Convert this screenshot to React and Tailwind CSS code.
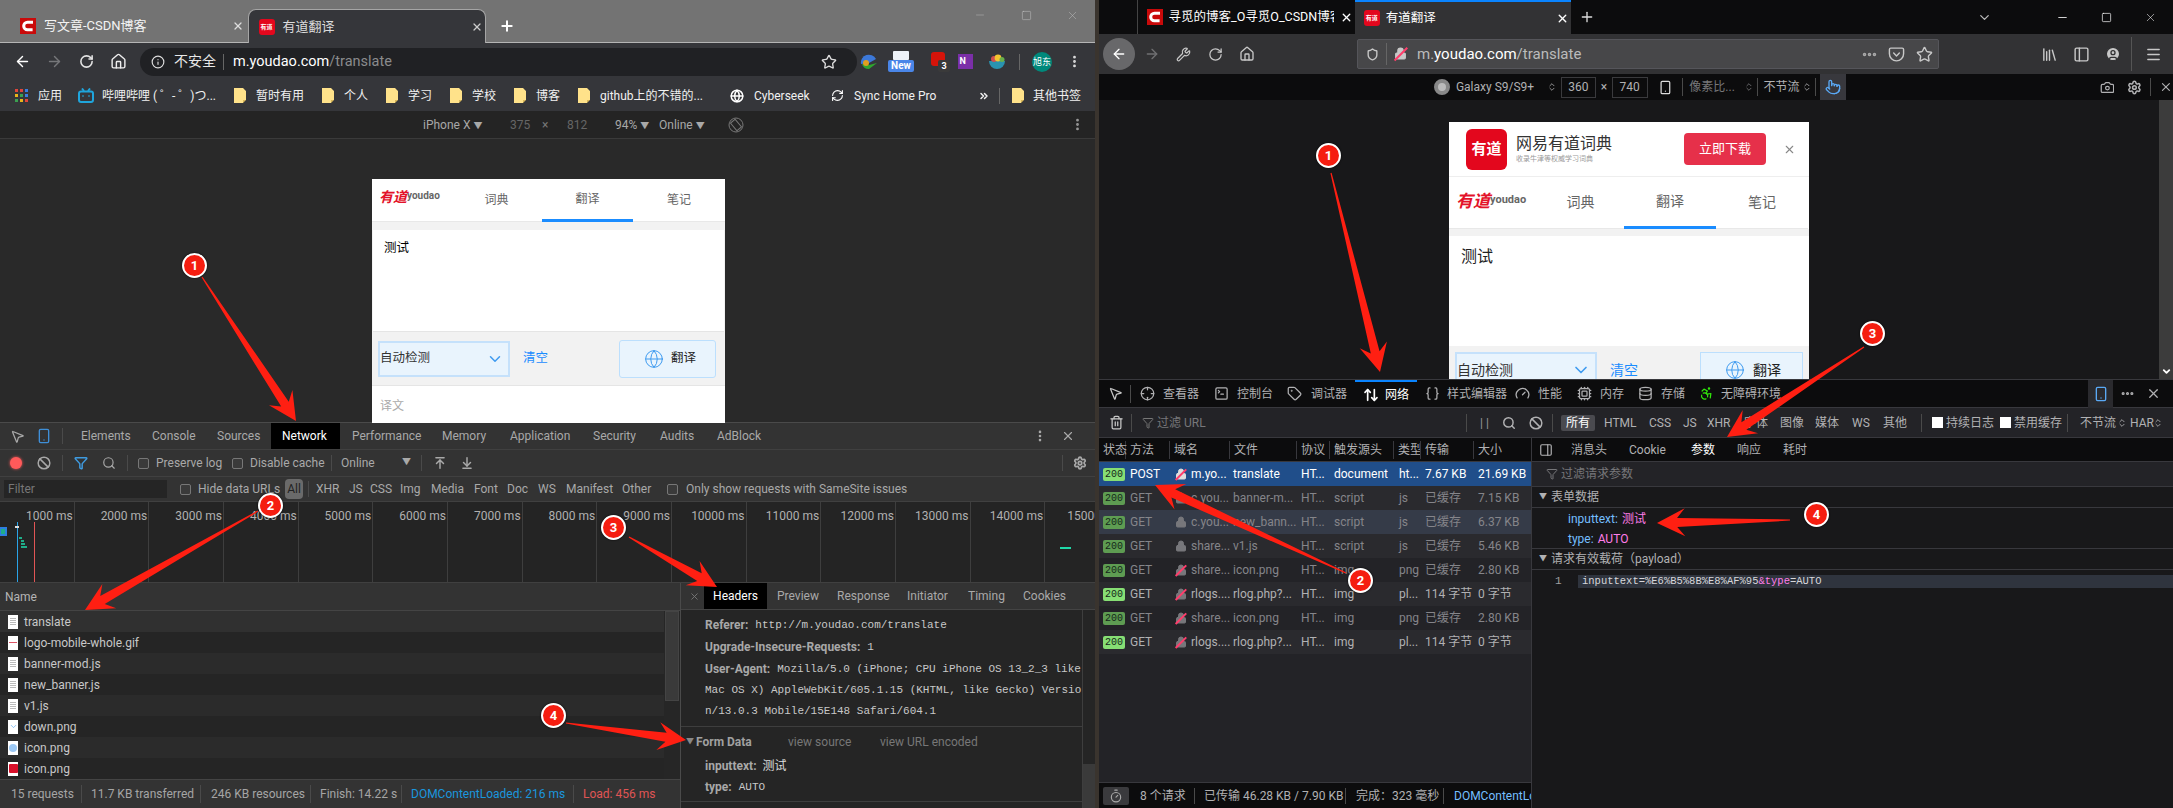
import React from 'react';
import { ArrowLeft, ArrowRight, RotateCw, House, Info, Star, X, Plus, EllipsisVertical, ChevronDown, Minus, Square, Shield, Lock, Wrench, Ellipsis, Menu, CircleUser, Trash2, Funnel, Search, Ban, Settings, Camera, Pointer, Smartphone, SquareTerminal, Braces, Gauge, Timer, Globe, Library, PanelLeft, Pocket, MousePointer2, ArrowUpDown, Cpu, Database, Accessibility, Tag, Crosshair, PanelRight, ChevronsRight, ChevronsUpDown, ArrowUpToLine, ArrowDownToLine, RefreshCw } from 'lucide-react';

function arrowPts(x1, y1, x2, y2, hl = 28, hw = 28, sw = 9) {
  const l = Math.hypot(x2 - x1, y2 - y1);
  const ux = (x2 - x1) / l, uy = (y2 - y1) / l, nx = -uy, ny = ux;
  const p = (d, s) => `${x2 - ux * d + nx * s},${y2 - uy * d + ny * s}`;
  return [p(l, 0.6), p(hl * 0.72, sw / 2), p(hl, hw / 2), p(0, 0), p(hl, -hw / 2), p(hl * 0.72, -sw / 2), p(l, -0.6)].join(' ');
}

const arrows = [
  [202, 277, 296, 421], [258, 511, 85, 610], [629, 537, 717, 587], [566, 723, 686, 740],
  [1331, 173, 1380, 372], [1346, 573, 1155, 485], [1864, 347, 1727, 437], [1790, 520, 1657, 523],
];

function Marks() {
  return (
    <>
      <svg className="absolute left-0 top-0 pointer-events-none" width="2173" height="808">
        {arrows.map((a, i) => <polygon key={i} points={arrowPts(...a)} fill="#ff1f12" />)}
      </svg>
      <Dot c="left-[182px] top-[253px]">1</Dot>
      <Dot c="left-[258px] top-[493px]">2</Dot>
      <Dot c="left-[601px] top-[515px]">3</Dot>
      <Dot c="left-[541px] top-[703px]">4</Dot>
      <Dot c="left-[1316px] top-[143px]">1</Dot>
      <Dot c="left-[1348px] top-[568px]">2</Dot>
      <Dot c="left-[1860px] top-[321px]">3</Dot>
      <Dot c="left-[1804px] top-[502px]">4</Dot>
    </>
  );
}

function Dot({ c, children }) {
  return (
    <div className={`absolute w-[25px] h-[25px] rounded-full bg-[#f51d10] border-2 border-white flex items-center justify-center text-white font-bold text-[13px] shadow-[0_0_2px_#000] ${c}`}>
      {children}
    </div>
  );
}

function CsdnIcon() {
  return (
    <svg width="16" height="16" viewBox="0 0 16 16" className="shrink-0">
      <rect width="16" height="16" fill="#c90a0a" />
      <path d="M13 4.2 H7.5 a3.8 3.8 0 0 0 0 7.6 H12.6" fill="none" stroke="#fff" strokeWidth="3" />
    </svg>
  );
}

function YdIcon() {
  return (
    <div className="w-[16px] h-[16px] shrink-0 rounded-[3px] bg-[#e3071d] flex items-center justify-center text-white text-[6px] font-bold overflow-hidden leading-none">有道</div>
  );
}

function Folder() {
  return (
    <svg width="12" height="15" viewBox="0 0 12 15" className="shrink-0">
      <path d="M0 0H9L12 3V12H9V15H0Z" fill="#ffe28a" />
      <path d="M9 12H12L9 15Z" fill="#d9b85a" />
    </svg>
  );
}

function Cb() {
  return <div className="w-[11px] h-[11px] shrink-0 rounded-[2px] border border-[#777] bg-[#3a3a3a]" />;
}

function Sep({ c }) {
  return <div className={`w-px shrink-0 bg-[#4a4a4a] ${c}`} />;
}

function ChromeWindow() {
  return (
    <div className="w-[1095px] shrink-0 h-[808px] flex flex-col overflow-hidden">
      <div className="h-[43px] shrink-0 bg-[#737373] flex text-[13px] text-[#eee]">
        <div className="w-[248px] h-[43px] border-b border-[#b5b5b5] flex items-center pl-[20px] pt-[9px]">
          <CsdnIcon />
          <span className="ml-[8px] w-[188px] text-[#f3f3f3]">写文章-CSDN博客</span>
          <X size={12} strokeWidth={2.5} className="text-[#ddd]" />
        </div>
        <div className="w-[239px] h-[34px] mt-[9px] rounded-t-[8px] border border-b-0 border-[#a5a5a5] bg-[#35363a] flex items-center pl-[10px]">
          <YdIcon />
          <span className="ml-[8px] w-[188px] text-[#ddd]">有道翻译</span>
          <X size={12} strokeWidth={2.5} className="text-[#ccc]" />
        </div>
        <div className="flex-1 h-[43px] border-b border-[#b5b5b5] flex">
          <div className="w-[42px] h-[34px] mt-[9px] flex items-center justify-center"><Plus size={16} strokeWidth={3} className="text-white" /></div>
          <div className="ml-[429px] w-[46px] h-[30px] flex items-center justify-center text-[#bbb]"><Minus size={12} strokeWidth={1} /></div>
          <div className="w-[46px] h-[30px] flex items-center justify-center text-[#ccc]"><Square size={11} strokeWidth={1} /></div>
          <div className="w-[46px] h-[30px] flex items-center justify-center text-[#bbb]"><X size={13} strokeWidth={1} /></div>
        </div>
      </div>
      <div className="h-[37px] shrink-0 bg-[#35363a] flex items-center pl-[6px] text-white">
        <div className="w-[32px] flex justify-center"><ArrowLeft size={17} strokeWidth={2} /></div>
        <div className="w-[32px] flex justify-center text-[#76777a]"><ArrowRight size={17} strokeWidth={2} /></div>
        <div className="w-[32px] flex justify-center text-[#e4e4e4]"><RotateCw size={15} strokeWidth={2.5} /></div>
        <div className="w-[32px] flex justify-center text-[#eee]"><House size={17} strokeWidth={2} /></div>
        <div className="ml-[6px] w-[717px] h-[28px] rounded-full bg-[#202124] flex items-center pl-[11px] pr-[20px]">
          <Info size={14} className="text-[#ddd] shrink-0" />
          <span className="ml-[9px] w-[42px] text-[14px] text-[#e8e8e8]">不安全</span>
          <div className="ml-[7px] w-px h-[16px] bg-[#666]" />
          <span className="ml-[9px] text-[14.5px] text-[#fff]">m.youdao.com<span className="text-[#8a8b8d]">/translate</span></span>
          <Star size={16} className="ml-auto text-[#ddd]" />
        </div>
        <div className="w-[24px] flex justify-center">
          <svg width="18" height="16" viewBox="0 0 18 16"><path d="M1 10a8 8 0 0 1 15-5L9 9Z" fill="#3c78d8" /><path d="M2 10a7 7 0 0 0 7 5l8-6-8 2Z" fill="#2fa52f" /><circle cx="6" cy="9" r="3" fill="#e0a020" /></svg>
        </div>
        <div className="ml-[4px] w-[32px] flex flex-col items-center">
          <div className="w-[16px] h-[9px] bg-[#eef2f8] rounded-[1px]" />
          <div className="w-[26px] h-[12px] bg-[#4a86e8] rounded-[2px] text-white text-[10px] font-bold leading-[12px] text-center">New</div>
        </div>
        <div className="ml-[11px] w-[24px] h-[22px] relative">
          <div className="w-[14px] h-[14px] rounded-[3px] bg-[#d5140a] mt-[1px] ml-[3px]" />
          <div className="absolute left-[10px] top-[9px] w-[12px] h-[12px] rounded-[2px] bg-[#3a3a3a] text-white text-[9px] leading-[12px] text-center font-bold">3</div>
        </div>
        <div className="ml-[1px] w-[24px] flex justify-center">
          <div className="w-[15px] h-[15px] bg-[#7b2fa8] text-white text-[9px] font-bold leading-[15px] pl-[2px]">N</div>
        </div>
        <div className="ml-[8px] w-[24px] flex justify-center">
          <svg width="16" height="16" viewBox="0 0 16 16"><path d="M0 7a8 8 0 0 0 16 0Z" fill="#2a93b0" /><circle cx="5" cy="5" r="3" fill="#d05050" /><circle cx="9" cy="4" r="3.4" fill="#f3c530" /><circle cx="13" cy="5.5" r="2.5" fill="#6ab04a" /></svg>
        </div>
        <div className="ml-[10px] w-px h-[16px] bg-[#666]" />
        <div className="ml-[12px] w-[20px] h-[20px] rounded-full bg-[#00897b] text-white text-[9px] leading-[20px] text-center">旭东</div>
        <div className="ml-[14px] w-[16px] flex justify-center text-[#ddd]"><EllipsisVertical size={15} strokeWidth={2.5} /></div>
      </div>
      <div className="h-[31px] shrink-0 bg-[#35363a] flex items-center pl-[15px] text-[12px] text-[#f1f1f1]">
        <div className="w-[23px]">
          <svg width="13" height="13" viewBox="0 0 13 13">
            <rect width="3" height="3" fill="#e0453a" /><rect x="5" width="3" height="3" fill="#e0453a" /><rect x="10" width="3" height="3" fill="#3a7de0" />
            <rect y="5" width="3" height="3" fill="#e8b41a" /><rect x="5" y="5" width="3" height="3" fill="#3aa050" /><rect x="10" y="5" width="3" height="3" fill="#3a7de0" />
            <rect y="10" width="3" height="3" fill="#3aa050" /><rect x="5" y="10" width="3" height="3" fill="#e8b41a" /><rect x="10" y="10" width="3" height="3" fill="#e0453a" />
          </svg>
        </div>
        <span className="w-[40px]">应用</span>
        <div className="w-[24px]">
          <svg width="16" height="15" viewBox="0 0 16 15" fill="none" stroke="#1fa5dc" strokeWidth="2"><rect x="1" y="3.5" width="14" height="10.5" rx="2" /><path d="M4 0.5 6 3M12 0.5 10 3" /><path d="M5 7.5v1M11 7.5v1" /></svg>
        </div>
        <span className="w-[132px]">哔哩哔哩 ( ゜- ゜)つ...</span>
        <div className="w-[22px]"><Folder /></div><span className="w-[66px]">暂时有用</span>
        <div className="w-[22px]"><Folder /></div><span className="w-[42px]">个人</span>
        <div className="w-[22px]"><Folder /></div><span className="w-[42px]">学习</span>
        <div className="w-[22px]"><Folder /></div><span className="w-[42px]">学校</span>
        <div className="w-[22px]"><Folder /></div><span className="w-[42px]">博客</span>
        <div className="w-[22px]"><Folder /></div><span className="w-[130px]">github上的不错的...</span>
        <div className="w-[24px]"><Globe size={14} strokeWidth={2.5} className="text-white" /></div><span className="w-[77px]">Cyberseek</span>
        <div className="w-[23px]"><RefreshCw size={13} className="text-white" /></div><span className="w-[124px]">Sync Home Pro</span>
        <div className="w-[21px]"><ChevronsRight size={12} strokeWidth={3} /></div>
        <div className="w-[13px]"><div className="w-px h-[16px] bg-[#666]" /></div>
        <div className="w-[21px]"><Folder /></div><span>其他书签</span>
      </div>
      <div className="h-[28px] shrink-0 bg-[#242424] flex items-center pl-[423px] text-[12px] text-[#a8a8a8] border-b border-[#3a3a3a]">
        <span className="w-[87px]">iPhone X <span className="text-[9px]">▼</span></span>
        <span className="w-[32px] text-[#666]">375</span>
        <span className="w-[25px] text-[#777]">×</span>
        <span className="w-[48px] text-[#666]">812</span>
        <span className="w-[44px]">94% <span className="text-[9px]">▼</span></span>
        <span className="w-[69px]">Online <span className="text-[9px]">▼</span></span>
        <svg width="16" height="16" viewBox="0 0 16 16" fill="none" stroke="#777"><circle cx="8" cy="8" r="7" /><rect x="5" y="3" width="6" height="10" transform="rotate(-40 8 8)" /></svg>
        <EllipsisVertical size={15} strokeWidth={2.5} className="ml-auto mr-[10px] text-[#999]" />
      </div>
      <div className="h-[284px] shrink-0 bg-[#292929] pt-[40px] pl-[372px] border-b border-[#4a4a4a]">
        <div className="w-[353px] h-[244px] overflow-hidden bg-white">
          <div className="h-[43px] flex text-[12px] text-[#666]">
            <div className="w-[79px] pl-[7px] pt-[8px] flex items-start border-b border-[#e8e8e8]">
              <span className="text-[#e3122a] text-[14px] font-bold italic leading-[20px]">有道</span>
              <span className="text-[#666] text-[10px] font-bold leading-[18px]">youdao</span>
            </div>
            <div className="w-[91px] flex items-center justify-center border-b border-[#e8e8e8]">词典</div>
            <div className="w-[91px] flex items-center justify-center border-b-[3px] border-[#1a8cff]">翻译</div>
            <div className="w-[92px] flex items-center justify-center border-b border-[#e8e8e8]">笔记</div>
          </div>
          <div className="bg-[#f2f2f2] pt-[8px]">
            <div className="mx-px h-[102px] bg-white pl-[11px] pt-[9px] text-[12.5px] text-black border-b border-[#e5e5e5]">测试</div>
            <div className="h-[53px] flex items-center">
              <div className="ml-[6px] w-[132px] h-[36px] bg-[#e9f4fd] border-2 border-[#c5e1fb] flex items-center text-[12.5px] text-[#333]">
                自动检测
                <ChevronDown size={18} strokeWidth={2} className="ml-auto mr-[4px] text-[#3f9bf0]" />
              </div>
              <span className="ml-[13px] w-[96px] text-[12.5px] text-[#1a8cff]">清空</span>
              <div className="w-[97px] h-[38px] rounded-[3px] bg-[#e9f4fd] border border-[#bcdffd] flex items-center pl-[24px] text-[12.5px] text-[#222]">
                <Globe size={20} strokeWidth={1.2} className="text-[#3f9bf0]" />
                <span className="ml-[7px]">翻译</span>
              </div>
            </div>
          </div>
          <div className="border-t border-[#e5e5e5] pl-[8px] pt-[11px] text-[12px] text-[#aaa]">译文</div>
        </div>
      </div>
      <div className="flex-1 min-h-0 bg-[#333] text-[12px] text-[#a9a9a9] flex flex-col">
        <div className="h-[27px] shrink-0 flex items-center border-b border-[#404040]">
          <MousePointer2 size={15} className="ml-[10px] text-[#aaa]" />
          <Smartphone size={16} className="ml-[11px] text-[#3f8fd8]" />
          <Sep c="ml-[10px] h-[16px]" />
          <span className="ml-[18px] w-[71px]">Elements</span>
          <span className="w-[65px]">Console</span>
          <span className="w-[54px]">Sources</span>
          <div className="w-[69px] h-[26px] bg-black text-white flex items-center pl-[11px]">Network</div>
          <span className="ml-[12px] w-[90px]">Performance</span>
          <span className="w-[68px]">Memory</span>
          <span className="w-[83px]">Application</span>
          <span className="w-[67px]">Security</span>
          <span className="w-[57px]">Audits</span>
          <span className="w-[316px]">AdBlock</span>
          <EllipsisVertical size={14} strokeWidth={2.5} />
          <X size={14} strokeWidth={2} className="ml-[14px]" />
        </div>
        <div className="h-[27px] shrink-0 flex items-center border-b border-[#404040]">
          <div className="ml-[10px] w-[12px] h-[12px] rounded-full bg-[#ff5a5a] shadow-[0_0_3px_#ff5a5a]" />
          <Ban size={14} strokeWidth={2.5} className="ml-[15px]" />
          <Sep c="ml-[11px] h-[16px]" />
          <Funnel size={14} strokeWidth={2.5} className="ml-[11px] text-[#3f9be0]" />
          <Search size={14} strokeWidth={2} className="ml-[14px]" />
          <Sep c="ml-[11px] h-[16px]" />
          <div className="ml-[10px]"><Cb /></div>
          <span className="ml-[7px] w-[76px]">Preserve log</span>
          <Cb />
          <span className="ml-[7px] w-[81px]">Disable cache</span>
          <Sep c="h-[16px]" />
          <span className="ml-[9px] w-[61px]">Online</span>
          <span className="w-[19px] text-[9px]">▼</span>
          <Sep c="h-[16px]" />
          <ArrowUpToLine size={14} strokeWidth={2.5} className="ml-[11px]" />
          <ArrowDownToLine size={14} strokeWidth={2.5} className="ml-[13px]" />
          <Sep c="ml-auto h-[16px]" />
          <Settings size={14} strokeWidth={3} className="ml-[10px] mr-[8px]" />
        </div>
        <div className="h-[25px] shrink-0 flex items-center border-b border-[#404040]">
          <div className="ml-[4px] w-[163px] h-[18px] bg-[#252525] pl-[4px] leading-[18px] text-[#777]">Filter</div>
          <div className="ml-[13px]"><Cb /></div>
          <span className="ml-[7px] w-[87px]">Hide data URLs</span>
          <div className="w-[18px] h-[20px] rounded-[4px] bg-[#6a6a6a] text-[#222] text-center leading-[20px]">All</div>
          <Sep c="ml-[5px] h-[16px]" />
          <span className="ml-[7px] w-[33px]">XHR</span>
          <span className="w-[21px]">JS</span>
          <span className="w-[30px]">CSS</span>
          <span className="w-[31px]">Img</span>
          <span className="w-[43px]">Media</span>
          <span className="w-[33px]">Font</span>
          <span className="w-[31px]">Doc</span>
          <span className="w-[28px]">WS</span>
          <span className="w-[56px]">Manifest</span>
          <span className="w-[45px]">Other</span>
          <Cb />
          <span className="ml-[8px]">Only show requests with SameSite issues</span>
        </div>
        <div className="h-[81px] shrink-0 bg-[#242424] flex border-b border-[#404040] text-[#b0b0b0] overflow-hidden relative">
          {['1000', '2000', '3000', '4000', '5000', '6000', '7000', '8000', '9000', '10000', '11000', '12000', '13000', '14000'].map((t) => (
            <div key={t} className="w-[74.66px] shrink-0 border-r border-[#3e3e3e] text-right pr-px pt-[6px] leading-[16px]">{t} ms</div>
          ))}
          <div className="w-[50px] pl-[22px] pt-[6px] leading-[16px] overflow-hidden">15000</div>
          <svg className="absolute left-0 top-0" width="1095" height="81">
            <rect x="0" y="25" width="7" height="9" fill="#2d7fe0" /><rect x="1" y="27" width="4" height="5" fill="#1fae8a" />
            <rect x="17" y="20" width="1" height="61" fill="#2aa4e8" /><rect x="34" y="20" width="1" height="61" fill="#e25555" />
            <rect x="15" y="24" width="4" height="2" fill="#ddd" />
            <rect x="19" y="35" width="3" height="2" fill="#1fae8a" /><rect x="21" y="38" width="3" height="2" fill="#1fae8a" /><rect x="21" y="41" width="4" height="2" fill="#1fae8a" /><rect x="21" y="44" width="6" height="2" fill="#1fae8a" />
            <rect x="1060" y="45" width="11" height="2" fill="#1fd8a8" />
          </svg>
        </div>
        <div className="flex-1 min-h-0 flex">
          <div className="w-[680px] shrink-0 flex flex-col">
            <div className="h-[28px] shrink-0 flex items-center pl-[5px] border-b border-[#444] text-[#b5b5b5]">Name</div>
            <div className="h-[168px] shrink-0 flex">
              <div className="flex-1">
                {[
                  ['translate', 'doc', 'bg-[#303030]'],
                  ['logo-mobile-whole.gif', 'gif', 'bg-[#252525]'],
                  ['banner-mod.js', 'doc', 'bg-[#2b2b2b]'],
                  ['new_banner.js', 'doc', 'bg-[#252525]'],
                  ['v1.js', 'doc', 'bg-[#2b2b2b]'],
                  ['down.png', 'down', 'bg-[#252525]'],
                  ['icon.png', 'globe', 'bg-[#2b2b2b]'],
                  ['icon.png', 'red', 'bg-[#252525]'],
                ].map(([t, k, bg], i) => (
                  <div key={i} className={`h-[21px] flex items-center pl-[8px] text-[#c8c8c8] ${bg}`}>
                    <div className="w-[10px] h-[14px] bg-white shrink-0 flex flex-col items-center justify-center gap-px">
                      {k === 'doc' && <><div className="w-[6px] h-px bg-[#bbb]" /><div className="w-[6px] h-px bg-[#bbb]" /><div className="w-[6px] h-px bg-[#bbb]" /><div className="w-[6px] h-px bg-[#bbb]" /></>}
                      {k === 'gif' && <div className="w-[8px] h-px bg-[#d56]" />}
                      {k === 'down' && <ChevronDown size={9} className="text-[#6ab0f0]" />}
                      {k === 'globe' && <div className="w-[8px] h-[8px] rounded-full bg-[#9cc8f4]" />}
                      {k === 'red' && <div className="w-[9px] h-[9px] rounded-[1px] bg-[#d8102a]" />}
                    </div>
                    <span className="ml-[6px]">{t}</span>
                  </div>
                ))}
              </div>
              <div className="w-[16px] bg-[#262626]"><div className="mx-auto w-[14px] h-[90px] bg-[#3a3a3a] border border-[#444]" /></div>
            </div>
            <div className="flex-1 flex items-center border-t border-[#444] text-[#a5a5a5]">
              <span className="ml-[11px] w-[70px]">15 requests</span>
              <Sep c="h-[18px]" />
              <span className="ml-[9px] w-[109px]">11.7 KB transferred</span>
              <Sep c="h-[18px]" />
              <span className="ml-[10px] w-[99px]">246 KB resources</span>
              <Sep c="h-[18px]" />
              <span className="ml-[9px] w-[81px]">Finish: 14.22 s</span>
              <Sep c="h-[18px]" />
              <span className="ml-[9px] w-[162px] text-[#1a96de]">DOMContentLoaded: 216 ms</span>
              <Sep c="h-[18px]" />
              <span className="ml-[9px] text-[#e05555]">Load: 456 ms</span>
            </div>
          </div>
          <div className="flex-1 min-w-0 flex flex-col border-l border-[#4a4a4a] bg-[#252525]">
            <div className="h-[27px] shrink-0 flex items-center bg-[#333] border-b border-[#444]">
              <X size={11} className="ml-[8px] text-[#777]" />
              <div className="ml-[4px] w-[63px] h-[26px] bg-black text-white flex items-center justify-center">Headers</div>
              <span className="ml-[10px] w-[60px]">Preview</span>
              <span className="w-[70px]">Response</span>
              <span className="w-[61px]">Initiator</span>
              <span className="w-[55px]">Timing</span>
              <span>Cookies</span>
            </div>
            <div className="flex-1 min-h-0 flex">
              <div className="w-[401px] shrink-0 overflow-hidden">
                <div className="pt-[4px] pl-[24px] font-['Liberation_Mono',monospace] text-[11px] text-[#c8c8c8]">
                  <div className="h-[22px] flex items-center"><b className="font-['Roboto','Noto_Sans_CJK_SC',sans-serif] text-[12px] text-[#a8a8a8] mr-[7px]">Referer:</b>http://m.youdao.com/translate</div>
                  <div className="h-[22px] flex items-center"><b className="font-['Roboto','Noto_Sans_CJK_SC',sans-serif] text-[12px] text-[#a8a8a8] mr-[7px]">Upgrade-Insecure-Requests:</b>1</div>
                  <div className="h-[22px] flex items-center"><b className="font-['Roboto','Noto_Sans_CJK_SC',sans-serif] text-[12px] text-[#a8a8a8] mr-[7px]">User-Agent:</b>Mozilla/5.0 (iPhone; CPU iPhone OS 13_2_3 like</div>
                  <div className="h-[21px] flex items-center">Mac OS X) AppleWebKit/605.1.15 (KHTML, like Gecko) Versio</div>
                  <div className="h-[21px] flex items-center">n/13.0.3 Mobile/15E148 Safari/604.1</div>
                </div>
                <div className="mt-[4px] h-[30px] border-t border-[#3e3e3e] flex items-center pl-[5px] text-[#a0a0a0]">
                  <span className="text-[8px] text-[#888] mr-[2px]">▼</span>
                  <b className="w-[92px]">Form Data</b>
                  <span className="w-[92px] text-[#777]">view source</span>
                  <span className="text-[#777]">view URL encoded</span>
                </div>
                <div className="pl-[24px] h-[46px] border-b border-[#3e3e3e]">
                  <div className="h-[20px] flex items-center"><b className="text-[#a8a8a8] mr-[6px]">inputtext:</b><span className="text-[#ddd]">测试</span></div>
                  <div className="h-[22px] flex items-center"><b className="text-[#a8a8a8] mr-[7px]">type:</b><span className="font-['Liberation_Mono',monospace] text-[11px] text-[#c8c8c8]">AUTO</span></div>
                </div>
              </div>
              <div className="flex-1 border-l border-[#3e3e3e] flex flex-col justify-end">
                <div className="h-[44px] bg-[#3a3a3a]" />
              </div>
            </div>
          </div>
        </div>
      </div>
    </div>
  );
}

function FfTabIcon({ i }) {
  const cls = 'text-[#b1b1b3] shrink-0';
  const map = { Crosshair, SquareTerminal, Tag, ArrowUpDown, Braces, Gauge, Cpu, Database, Accessibility };
  const I = map[i];
  return <I size={15} className={cls} />;
}

const rows = [
  ['POST', 'm.yo...', 'translate', 'HT...', 'document', 'ht...', '7.67 KB', '21.69 KB', 'sel', 'http'],
  ['GET', 'c.you...', 'banner-m...', 'HT...', 'script', 'js', '已缓存', '7.15 KB', 'dimA', 'lock'],
  ['GET', 'c.you...', 'new_bann...', 'HT...', 'script', 'js', '已缓存', '6.37 KB', 'dimH', 'lock'],
  ['GET', 'share...', 'v1.js', 'HT...', 'script', 'js', '已缓存', '5.46 KB', 'dimA', 'lock'],
  ['GET', 'share...', 'icon.png', 'HT...', 'img', 'png', '已缓存', '2.80 KB', 'dimB', 'http'],
  ['GET', 'rlogs....', 'rlog.php?...', 'HT...', 'img', 'pl...', '114 字节', '0 字节', 'A', 'http'],
  ['GET', 'share...', 'icon.png', 'HT...', 'img', 'png', '已缓存', '2.80 KB', 'dimB', 'http'],
  ['GET', 'rlogs....', 'rlog.php?...', 'HT...', 'img', 'pl...', '114 字节', '0 字节', 'A', 'http'],
];

function NetRow({ r }) {
  const [m, d, f, p, t, ty, tr, s, kind, sec] = r;
  const bg = kind === 'sel' ? 'bg-[#204e8a]' : kind === 'dimH' ? 'bg-[#353b48]' : kind === 'dimB' ? 'bg-[#232327]' : 'bg-[#2a2a2e]';
  const tc = kind === 'sel' ? 'text-white' : kind.startsWith('dim') ? 'text-[#85858a]' : 'text-[#b1b1b3]';
  const dim = kind.startsWith('dim');
  return (
    <div className={`h-[24px] grid grid-cols-[27px_44px_60px_67px_33px_64px_27px_53px_58px] items-center overflow-hidden ${bg} ${tc}`}>
      <div className="pl-[4px]">
        <div className={`w-[22px] h-[13px] rounded-[2px] text-[#14281a] font-['Liberation_Mono',monospace] text-[10px] leading-[13px] text-center ${dim ? 'bg-[#5e9c52]' : 'bg-[#86de74]'}`}>200</div>
      </div>
      <div className="pl-[4px]">{m}</div>
      <div className="pl-[5px] flex items-center">
        {sec === 'lock'
          ? <Lock size={12} className="text-[#77777b] shrink-0" fill="#77777b" />
          : <div className="relative w-[12px] h-[12px] shrink-0"><Lock size={12} fill="currentColor" className={kind === 'sel' ? 'text-[#ddd]' : 'text-[#77777b]'} /><div className="absolute left-[5px] top-[-1px] w-[1.5px] h-[15px] rotate-45 bg-[#ff3d6b]" /></div>}
        <span className="ml-[4px] overflow-hidden">{d}</span>
      </div>
      <div className="pl-[3px] overflow-hidden">{f}</div>
      <div className="pl-[4px]">{p}</div>
      <div className="pl-[4px]">{t}</div>
      <div className="pl-[5px]">{ty}</div>
      <div className="pl-[4px] overflow-hidden">{tr}</div>
      <div className="pl-[4px]">{s}</div>
    </div>
  );
}

function FirefoxWindow() {
  return (
    <div className="flex-1 min-w-0 h-[808px] flex flex-col overflow-hidden bg-[#0c0c0d]">
      <div className="h-[34px] shrink-0 flex text-[13px] text-white">
        <div className="w-[39px]" />
        <div className="w-[226px] border-l border-[#444] flex items-center pl-[9px]">
          <CsdnIcon />
          <span className="ml-[6px] w-[165px] overflow-hidden whitespace-nowrap text-[12.5px]">寻觅的博客_O寻觅O_CSDN博客</span>
          <X size={13} strokeWidth={2.5} className="ml-[6px]" />
        </div>
        <div className="w-[224px] border-t-2 border-[#0a84ff] bg-[#323234] flex items-center pl-[9px]">
          <YdIcon />
          <span className="ml-[6px] w-[170px] text-[12.5px]">有道翻译</span>
          <X size={13} strokeWidth={2.5} />
        </div>
        <div className="w-[34px] flex items-center justify-center"><Plus size={16} className="text-[#ddd]" /></div>
        <div className="ml-[359px] w-[46px] flex items-center justify-center text-[#bbb]"><ChevronDown size={15} strokeWidth={2} /></div>
        <div className="ml-[33px] w-[46px] flex items-center justify-center"><Minus size={13} strokeWidth={1.5} /></div>
        <div className="w-[46px] flex items-center justify-center"><Square size={11} strokeWidth={1.5} /></div>
        <div className="w-[46px] flex items-center justify-center"><X size={13} strokeWidth={1} /></div>
      </div>
      <div className="h-[40px] shrink-0 bg-[#323234] flex items-center text-[#c8c8c8]">
        <div className="ml-[4px] w-[32px] h-[32px] rounded-full bg-[#68686a] flex items-center justify-center text-white"><ArrowLeft size={16} strokeWidth={2} /></div>
        <ArrowRight size={16} strokeWidth={2} className="ml-[9px] text-[#707072]" />
        <Wrench size={15} strokeWidth={2} className="ml-[16px]" />
        <RotateCw size={15} strokeWidth={2} className="ml-[17px]" />
        <House size={16} strokeWidth={2} className="ml-[16px]" />
        <div className="ml-[102px] w-[582px] h-[30px] rounded-[2px] border border-[#55555a] bg-[#474749] flex items-center pl-[8px]">
          <Shield size={13} strokeWidth={2.5} className="text-[#c8c8c8]" />
          <div className="ml-[7px] w-px h-[22px] bg-[#666]" />
          <div className="relative ml-[7px] w-[14px] h-[14px]"><Lock size={13} fill="#c8c8c8" className="text-[#c8c8c8]" /><div className="absolute left-[6px] top-[-2px] w-[1.5px] h-[18px] rotate-45 bg-[#ff3d6b]" /></div>
          <span className="ml-[9px] text-[15px] text-[#bbb]">m.<span className="text-white">youdao.com</span>/translate</span>
          <Ellipsis size={17} strokeWidth={3} className="ml-auto text-[#aaa]" />
          <Pocket size={17} strokeWidth={2} className="ml-[10px]" />
          <Star size={17} strokeWidth={2} className="ml-[11px] mr-[5px]" />
        </div>
        <Library size={17} className="ml-[102px]" />
        <PanelLeft size={17} className="ml-[15px]" />
        <CircleUser size={16} fill="#c8c8c8" className="ml-[15px] text-[#323234]" />
        <div className="ml-[10px] w-px h-[34px] bg-[#555]" />
        <Menu size={17} strokeWidth={2} className="ml-[13px]" />
      </div>
      <div className="h-[26px] shrink-0 flex items-center text-[12px] text-[#b1b1b3]">
        <div className="ml-[335px] w-[16px] h-[16px] rounded-full border-[4px] border-[#888] bg-[#bbb]" />
        <span className="ml-[6px] w-[92px]">Galaxy S9/S9+</span>
        <ChevronsUpDown size={10} className="text-[#aaa]" />
        <div className="ml-[4px] w-[36px] h-[21px] border border-[#3a3a3d] text-center leading-[19px]">360</div>
        <span className="w-[16px] text-center">×</span>
        <div className="w-[36px] h-[21px] border border-[#3a3a3d] text-center leading-[19px]">740</div>
        <Smartphone size={15} className="ml-[10px] text-[#ddd]" />
        <Sep c="ml-[10px] h-[18px]" />
        <span className="ml-[6px] w-[55px] text-[#77777a]">像素比...</span>
        <ChevronsUpDown size={10} className="text-[#77777a]" />
        <Sep c="ml-[3px] h-[18px]" />
        <span className="ml-[6px] w-[39px]">不节流</span>
        <ChevronsUpDown size={10} />
        <Sep c="ml-[3px] h-[18px]" />
        <div className="ml-[4px] w-[26px] h-[26px] bg-[#38383d] flex items-center justify-center text-[#5aa9f5]"><Pointer size={16} /></div>
        <Camera size={15} className="ml-[254px]" />
        <Settings size={15} strokeWidth={2.5} className="ml-[13px]" />
        <Sep c="ml-[8px] h-[18px]" />
        <X size={14} className="ml-[8px]" />
      </div>
      <div className="h-[279px] shrink-0 bg-[#18181a] flex overflow-hidden">
        <div className="ml-[350px] w-[360px] mt-[22px] h-[257px] overflow-hidden bg-white shrink-0">
          <div className="h-[55px] flex items-center border-b border-[#eee]">
            <div className="ml-[17px] w-[41px] h-[41px] rounded-[6px] bg-[#e3071d] flex items-center justify-center text-white font-bold text-[15px]">有道</div>
            <div className="ml-[9px] w-[168px]">
              <div className="text-[16px] leading-[19px] text-[#333]">网易有道词典</div>
              <div className="text-[7px] leading-[12px] text-[#999]">收录牛津等权威学习词典</div>
            </div>
            <div className="w-[82px] h-[32px] rounded-[4px] bg-[#e6304a] text-white text-[13px] flex items-center justify-center">立即下载</div>
            <X size={13} className="ml-[17px] text-[#888]" />
          </div>
          <div className="h-[52px] flex text-[14px] text-[#666]">
            <div className="w-[88px] pl-[7px] pt-[13px] flex items-start border-b border-[#e8e8e8]">
              <span className="text-[#e3122a] text-[17px] font-bold italic leading-[22px]">有道</span>
              <span className="text-[#666] text-[11px] font-bold leading-[20px]">youdao</span>
            </div>
            <div className="w-[87px] flex items-center justify-center border-b border-[#e8e8e8]">词典</div>
            <div className="w-[92px] flex items-center justify-center border-b-[3px] border-[#1a8cff]">翻译</div>
            <div className="w-[92px] flex items-center justify-center border-b border-[#e8e8e8]">笔记</div>
          </div>
          <div className="bg-[#f2f2f2] pt-[7px]">
            <div className="h-[110px] bg-white pl-[12px] pt-[9px] text-[16px] text-[#222]">测试</div>
            <div className="flex pt-[6px]">
              <div className="ml-[6px] w-[142px] h-[36px] bg-[#e9f4fd] border-2 border-[#c5e1fb] flex items-center text-[14px] text-[#333]">
                自动检测
                <ChevronDown size={20} className="ml-auto mr-[4px] text-[#3f9bf0]" />
              </div>
              <span className="ml-[13px] w-[90px] pt-[8px] text-[14px] text-[#1a8cff]">清空</span>
              <div className="w-[103px] h-[36px] border border-[#bcdffd] bg-[#e9f4fd] flex items-center pl-[24px] text-[14px] text-[#222]">
                <Globe size={20} strokeWidth={1.2} className="text-[#3f9bf0]" /><span className="ml-[8px]">翻译</span>
              </div>
            </div>
          </div>
        </div>
        <div className="flex-1" />
        <div className="w-[14px] shrink-0 bg-[#3c3c3c] flex flex-col items-center justify-end">
          <ChevronDown size={11} strokeWidth={4} className="text-white mb-[2px]" />
        </div>
      </div>
      <div className="flex-1 min-h-0 flex flex-col text-[12px] text-[#b1b1b3] border-t border-[#38383d]">
        <div className="h-[28px] shrink-0 flex items-center border-b border-[#38383d]">
          <div className="ml-[9px]"><MousePointer2 size={15} className="text-[#c8c8c8]" /></div>
          <Sep c="ml-[7px] h-[18px]" />
          <div className="ml-[9px] w-[23px]"><FfTabIcon i="Crosshair" /></div>
          <span className="w-[51px]">查看器</span>
          <div className="w-[23px]"><FfTabIcon i="SquareTerminal" /></div>
          <span className="w-[50px]">控制台</span>
          <div className="w-[24px]"><FfTabIcon i="Tag" /></div>
          <span className="w-[44px]">调试器</span>
          <div className="w-[62px] h-[28px] border-t-2 border-[#0a84ff] text-white flex items-center pl-[8px] gap-[6px]"><ArrowUpDown size={16} strokeWidth={2.5} />网络</div>
          <div className="ml-[8px] w-[22px]"><FfTabIcon i="Braces" /></div>
          <span className="w-[68px]">样式编辑器</span>
          <div className="w-[23px]"><FfTabIcon i="Gauge" /></div>
          <span className="w-[39px]">性能</span>
          <div className="w-[23px]"><FfTabIcon i="Cpu" /></div>
          <span className="w-[38px]">内存</span>
          <div className="w-[23px]"><FfTabIcon i="Database" /></div>
          <span className="w-[38px]">存储</span>
          <div className="w-[22px]"><Accessibility size={15} className="text-[#30e60b]" /></div>
          <span className="w-[367px]">无障碍环境</span>
          <div className="w-[25px] h-[28px] bg-[#2a2a2e] flex items-center justify-center text-[#5aa9f5]"><Smartphone size={16} /></div>
          <Ellipsis size={15} strokeWidth={3} className="ml-[7px]" />
          <X size={15} className="ml-[11px]" />
        </div>
        <div className="h-[30px] shrink-0 bg-[#232327] flex items-center border-b border-[#38383d]">
          <Trash2 size={15} className="ml-[10px] text-[#c8c8c8]" />
          <Sep c="ml-[7px] h-[18px]" />
          <Funnel size={12} className="ml-[10px] text-[#777]" />
          <span className="ml-[3px] w-[309px] text-[#77777a]">过滤 URL</span>
          <Sep c="h-[18px]" />
          <span className="ml-[13px] w-[22px] text-[#999]">| |</span>
          <Search size={14} strokeWidth={2.5} />
          <Ban size={14} strokeWidth={2.5} className="ml-[13px]" />
          <Sep c="ml-[9px] h-[18px]" />
          <div className="ml-[8px] w-[34px] h-[16px] rounded-[2px] bg-[#4a4a4f] text-white text-center leading-[16px]">所有</div>
          <span className="ml-[9px] w-[45px]">HTML</span>
          <span className="w-[34px]">CSS</span>
          <span className="w-[24px]">JS</span>
          <span className="w-[37px]">XHR</span>
          <span className="w-[36px]">字体</span>
          <span className="w-[35px]">图像</span>
          <span className="w-[37px]">媒体</span>
          <span className="w-[31px]">WS</span>
          <span className="w-[38px]">其他</span>
          <Sep c="h-[18px]" />
          <div className="ml-[10px] w-[11px] h-[11px] bg-white" />
          <span className="ml-[3px] w-[54px]">持续日志</span>
          <div className="w-[11px] h-[11px] bg-white" />
          <span className="ml-[3px] w-[53px]">禁用缓存</span>
          <Sep c="h-[18px]" />
          <span className="ml-[12px] w-[36px]">不节流</span>
          <ChevronsUpDown size={10} className="ml-[1px]" />
          <span className="ml-[3px] w-[23px]">HAR</span>
          <ChevronsUpDown size={10} />
        </div>
        <div className="flex-1 min-h-0 flex">
          <div className="w-[433px] shrink-0 border-r border-[#38383d] flex flex-col bg-[#232327]">
            <div className="h-[24px] shrink-0 bg-[#0c0c0d] grid grid-cols-[27px_44px_60px_67px_33px_64px_27px_53px_58px] items-center border-b border-[#38383d] overflow-hidden">
              <div className="pl-[4px] border-r border-[#38383d]">状态</div>
              <div className="pl-[4px] border-r border-[#38383d]">方法</div>
              <div className="pl-[4px] border-r border-[#38383d]">域名</div>
              <div className="pl-[4px] border-r border-[#38383d]">文件</div>
              <div className="pl-[4px] border-r border-[#38383d]">协议</div>
              <div className="pl-[4px] border-r border-[#38383d]">触发源头</div>
              <div className="pl-[4px] border-r border-[#38383d] overflow-hidden">类型</div>
              <div className="pl-[4px] border-r border-[#38383d]">传输</div>
              <div className="pl-[4px]">大小</div>
            </div>
            {rows.map((r, i) => <NetRow key={i} r={r} />)}
            <div className="flex-1" />
            <div className="h-[26px] shrink-0 bg-[#0c0c0d] border-t border-[#38383d] flex items-center overflow-hidden">
              <div className="ml-[4px] w-[26px] h-[18px] shrink-0 rounded-[2px] bg-[#3a3a3d] flex items-center justify-center"><Timer size={14} className="text-[#aaa]" /></div>
              <span className="ml-[11px] w-[54px] shrink-0">8 个请求</span>
              <Sep c="h-[16px]" />
              <span className="ml-[9px] w-[141px] shrink-0">已传输 46.28 KB / 7.90 KB</span>
              <Sep c="h-[16px]" />
              <span className="ml-[10px] w-[87px] shrink-0">完成：323 毫秒</span>
              <Sep c="h-[16px]" />
              <span className="ml-[10px] shrink-0 text-[#75bfff]">DOMContentLoaded</span>
            </div>
          </div>
          <div className="flex-1 min-w-0 flex flex-col bg-[#18181a]">
            <div className="h-[24px] shrink-0 bg-[#0c0c0d] flex items-center border-b border-[#38383d]">
              <PanelRight size={14} className="ml-[7px] w-[14px]" />
              <span className="ml-[18px] w-[58px]">消息头</span>
              <span className="w-[62px]">Cookie</span>
              <span className="w-[46px] text-white">参数</span>
              <span className="w-[46px]">响应</span>
              <span>耗时</span>
            </div>
            <div className="h-[25px] shrink-0 bg-[#232327] flex items-center border-b border-[#38383d] pl-[14px] text-[#77777a]">
              <Funnel size={12} /><span className="ml-[3px]">过滤请求参数</span>
            </div>
            <div className="h-[21px] shrink-0 flex items-center border-b border-[#38383d] pl-[7px]"><span className="text-[8px] mr-[4px]">▼</span>表单数据</div>
            <div className="h-[41px] shrink-0 border-b border-[#38383d] pl-[36px]">
              <div className="h-[21px] flex items-center"><span className="text-[#75bfff]">inputtext:</span><span className="ml-[4px] text-[#ff7de9]">测试</span></div>
              <div className="h-[19px] flex items-center"><span className="text-[#75bfff]">type:</span><span className="ml-[4px] text-[#ff7de9]">AUTO</span></div>
            </div>
            <div className="h-[21px] shrink-0 flex items-center border-b border-[#38383d] pl-[7px]"><span className="text-[8px] mr-[4px]">▼</span>请求有效载荷（payload）</div>
            <div className="mt-[5px] h-[13px] shrink-0 flex items-center">
              <span className="ml-[23px] w-[23px] text-[#a0a0a2] font-['Liberation_Mono',monospace] text-[11px]">1</span>
              <div className="flex-1 h-[13px] bg-[#2f343e] pl-[4px] font-['Liberation_Mono',monospace] text-[10.5px] leading-[13px] text-[#d7d7db]">inputtext=%E6%B5%8B%E8%AF%95<span className="text-[#ff7de9]">&amp;type</span>=AUTO</div>
            </div>
          </div>
        </div>
      </div>
    </div>
  );
}

export default function App() {
  return (
    <div className="relative w-[2173px] h-[808px] flex overflow-hidden whitespace-nowrap bg-[#3a342e] font-['Roboto','Noto_Sans_CJK_SC',sans-serif]">
      <ChromeWindow />
      <div className="w-[4px] shrink-0 bg-[#3a342e]" />
      <FirefoxWindow />
      <Marks />
    </div>
  );
}
